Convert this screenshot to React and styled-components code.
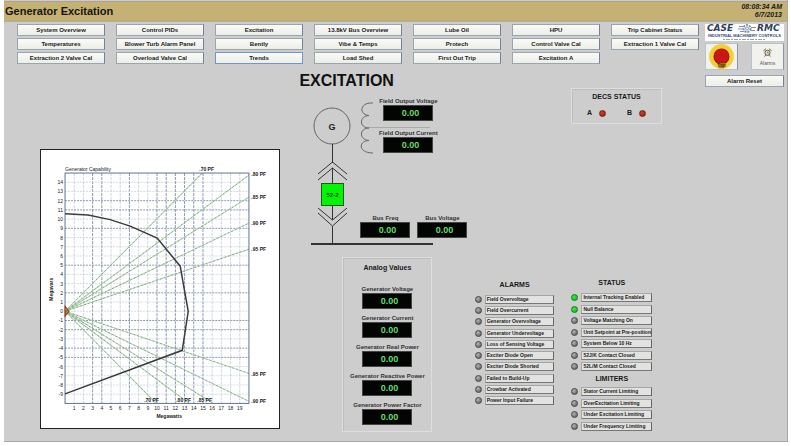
import React from "react";
import styled, { createGlobalStyle } from "styled-components";

const GlobalStyle = createGlobalStyle`
  * { box-sizing: border-box; }
  body {
    margin: 0;
    background: #fff;
    color: #1a1a1a;
    font-family: "Liberation Sans", Arial, sans-serif;
    font-size: 6px;
    line-height: 8px;
  }
  button { font: inherit; color: inherit; cursor: pointer; }
  h1, h2, h3, dl, dd, ul, figure { margin: 0; padding: 0; }
`;

const Screen = styled.div`
  margin: 0 3px 0 4px;
  padding-top: 1px;
  background: #cdcdcd;
  border: solid #a9a9a9;
  border-width: 0 1px 1px 0;
`;

const Header = styled.header`
  display: flex;
  justify-content: space-between;
  align-items: center;
  height: 21px;
  padding: 0 5px 0 1px;
  background: #c5b173;
  border-top: 1px solid #aaa493;
  border-bottom: 2px solid #b9ae8a;
`;

const Title = styled.h1`
  font-size: 11px;
  line-height: 16px;
  color: #16160f;
`;

const Clock = styled.div`
  font-size: 7px;
  line-height: 8px;
  font-weight: bold;
  font-style: italic;
  text-align: right;
`;

const Body = styled.div`
  display: flex;
  gap: 6px;
  padding: 2px 3px 9px 13px;
`;

const Main = styled.main`
  flex: 1;
  min-width: 0;
`;

const Nav = styled.nav`
  display: grid;
  grid-template-columns: repeat(7, minmax(0, 1fr));
  gap: 2px 11px;
`;

const NavButton = styled.button`
  height: 12px;
  padding: 0;
  background: linear-gradient(#fafaf6, #eeeee8);
  border: 1px solid ${(p) => (p.$active ? "#6f97cc" : "#98a5b2")};
  border-right-color: ${(p) => (p.$active ? "#6f97cc" : "#70839b")};
  font-weight: bold;
  font-size: 6px;
  line-height: 8px;
  white-space: nowrap;
`;

const Side = styled.aside`
  display: grid;
  grid-template-columns: 33px 33px;
  justify-content: space-between;
  align-content: start;
  width: 79px;
  row-gap: 2px;
`;

const Wide = styled.div`
  grid-column: 1 / -1;
  display: grid;
  margin-top: ${(p) => p.$top || 0}px;
`;

const IconButton = styled.button`
  display: flex;
  flex-direction: column;
  align-items: center;
  justify-content: center;
  gap: 3px;
  height: 27px;
  padding: 0;
  background: #f1f1ed;
  border: 1px solid #b8c3ce;
  border-right-color: #8796a8;
  color: #555;
  font-size: 5px;
  line-height: 6px;
`;

const Content = styled.div`
  display: grid;
  grid-template-columns: minmax(0, 240fr) minmax(0, 178fr) minmax(0, 187fr);
  gap: 8px;
  padding: 7px 37px 0 23px;
`;

const ChartFrame = styled.figure`
  align-self: start;
  margin-top: 78px;
  border: 1px solid #222;
  background: #fff;
  svg { display: block; width: 100%; height: auto; }
`;

const ChartText = styled.text`
  font-size: 5px;
  font-weight: ${(p) => (p.$bold ? "bold" : "normal")};
  text-anchor: ${(p) => p.$anchor || "start"};
  fill: #222;
`;

const Centre = styled.section`
  padding-left: 11px;
`;

const Heading = styled.h2`
  font-size: 16px;
  line-height: 20px;
  color: #111;
`;

const Diagram = styled.div`
  position: relative;
  height: 158px;
  svg { display: block; }
`;

const Node = styled.div`
  position: absolute;
  left: ${(p) => p.$x}px;
  top: ${(p) => p.$y}px;
`;

const ReadoutBox = styled.dl`
  display: flex;
  flex-direction: column;
  align-items: center;
  width: 50px;
`;

const ReadoutLabel = styled.dt`
  font-size: 6px;
  line-height: 8px;
  font-weight: bold;
  color: #333;
  white-space: nowrap;
`;

const ReadoutValue = styled.dd`
  width: 50px;
  height: 16px;
  padding-left: 4px;
  background: #030503;
  border: 1px solid #444;
  color: #62de6a;
  font-size: 9px;
  line-height: 14px;
  font-weight: bold;
  text-align: center;
`;

const Panel = styled.section`
  border: 1px solid #dedede;
  box-shadow: inset 1px 1px 0 #bdbdbd;
`;

const AnalogPanel = styled(Panel)`
  display: flex;
  flex-direction: column;
  align-items: center;
  gap: 5px;
  width: 90px;
  padding-bottom: 6px;
  margin: 8px 0 0 43px;
`;

const PanelTitle = styled.h3`
  font-size: 7px;
  line-height: 8px;
  text-align: center;
`;

const AnalogTitle = styled(PanelTitle)`
  padding: 6px 0 8px;
`;

const Right = styled.section`
  display: flex;
  flex-direction: column;
  padding-top: 17px;
`;

const DecsPanel = styled(Panel)`
  align-self: flex-end;
  width: 91px;
  height: 36px;
  padding-top: 4px;
`;

const DecsRow = styled.div`
  display: flex;
  justify-content: center;
  gap: 21px;
  margin-top: 8px;
  font-size: 7px;
  line-height: 8px;
  font-weight: bold;
`;

const DecsItem = styled.span`
  display: flex;
  align-items: center;
  gap: 7px;
`;

const Lamp = styled.span`
  flex: none;
  width: 7px;
  height: 7px;
  border-radius: 50%;
  border: 1px solid ${(p) => ({ red: "#4d3311", green: "#167820", off: "#454545" })[p.$tone]};
  background: ${(p) =>
    ({
      red: "radial-gradient(circle at 40% 35%, #e03a27, #b00808)",
      green: "radial-gradient(circle at 40% 35%, #30f530, #04b80a)",
      off: "radial-gradient(circle at 35% 30%, #b5b5b5, #555)",
    })[p.$tone]};
`;

const Lists = styled.div`
  display: grid;
  grid-template-columns: 1fr 1fr;
  column-gap: 17px;
  padding: 155px 10px 0 0;
`;

const Column = styled.div`
  padding-top: ${(p) => p.$top || 0}px;
`;

const ListTitle = styled(PanelTitle)`
  padding: ${(p) => p.$top || 0}px 0 ${(p) => p.$bottom}px;
`;

const LampList = styled.ul`
  display: flex;
  flex-direction: column;
  justify-content: space-between;
  min-height: ${(p) => p.$height}px;
  list-style: none;
`;

const LampRow = styled.li`
  display: flex;
  align-items: center;
  gap: 3px;
`;

const LampLabel = styled.span`
  flex: 1;
  height: 9px;
  padding-left: 1px;
  background: #e2e2e0;
  border: 1px solid #a6a6a6;
  border-right-color: #666;
  border-bottom-color: #777;
  font-size: 5px;
  line-height: 7px;
  font-weight: bold;
  white-space: nowrap;
`;

const navItems = [
  "System Overview", "Control PIDs", "Excitation", "13.8kV Bus Overview", "Lube Oil", "HPU", "Trip Cabinet Status",
  "Temperatures", "Blower Turb Alarm Panel", "Bently", "Vibe & Temps", "Protech", "Control Valve Cal", "Extraction 1 Valve Cal",
  "Extraction 2 Valve Cal", "Overload Valve Cal", "Trends", "Load Shed", "First Out Trip", "Excitation A",
];

const analogs = [
  "Generator Voltage", "Generator Current", "Generator Real Power", "Generator Reactive Power", "Generator Power Factor",
];

const alarms = [
  "Field Overvoltage", "Field Overcurrent", "Generator Overvoltage", "Generator Undervoltage", "Loss of Sensing Voltage",
  "Exciter Diode Open", "Exciter Diode Shorted", "Failed to Build-Up", "Crowbar Activated", "Power Input Failure",
].map((label) => ({ label, tone: "off" }));

const statuses = [
  { label: "Internal Tracking Enabled", tone: "green" },
  { label: "Null Balance", tone: "green" },
  { label: "Voltage Matching On", tone: "off" },
  { label: "Unit Setpoint at Pre-position", tone: "off" },
  { label: "System Below 10 Hz", tone: "off" },
  { label: "52J/K Contact Closed", tone: "off" },
  { label: "52L/M Contact Closed", tone: "off" },
];

const limiters = [
  "Stator Current Limiting", "OverExcitation Limiting", "Under Excitation Limiting", "Under Frequency Limiting",
].map((label) => ({ label, tone: "off" }));

function Readout({ label }) {
  return (
    <ReadoutBox>
      <ReadoutLabel>{label}</ReadoutLabel>
      <ReadoutValue>0.00</ReadoutValue>
    </ReadoutBox>
  );
}

function Lamps({ items, height }) {
  return (
    <LampList $height={height}>
      {items.map((item) => (
        <LampRow key={item.label}>
          <Lamp $tone={item.tone} />
          <LampLabel>{item.label}</LampLabel>
        </LampRow>
      ))}
    </LampList>
  );
}

function Logo() {
  return (
    <svg width="79" height="17" viewBox="0 0 79 17" role="img" aria-label="Case RMC">
      <rect width="79" height="17" fill="#fff" />
      <g fill="#2d405e" fontFamily="DejaVu Sans" fontWeight="bold" fontStyle="italic" fontSize="9">
        <text x="2" y="7">CASE</text>
        <text x="52" y="7">RMC</text>
      </g>
      <g fill="none" stroke="#7f8fa8">
        <circle cx="42" cy="4.500" r="3.500" strokeWidth="2" strokeDasharray="2 1" />
        <circle cx="42" cy="4.500" r="1.500" />
        <path d="M34 2.500h4M33 5h5M35 7.500h4M46 3.500h5M46 6.500h4" />
      </g>
      <text x="39.500" y="13" textAnchor="middle" fontSize="4" fontWeight="bold" fill="#334a78">INDUSTRIAL MACHINERY CONTROLS</text>
      <path d="M18 15.500h42" stroke="#9b9fa8" strokeDasharray="2 1 4 1" />
    </svg>
  );
}

function StopIcon() {
  return (
    <svg width="27" height="25" viewBox="0 0 27 25" aria-hidden="true">
      <circle cx="13.500" cy="12.500" r="12.400" fill="#f4cf35" />
      <circle cx="13.500" cy="12.500" r="8" fill="#a91414" />
      <circle cx="13.500" cy="12" r="7" fill="#c91616" />
      <path d="M9 19h9l-2 5h-5z" fill="#a87c1a" />
      <text x="13.500" y="23" textAnchor="middle" fontSize="5" fill="#2b1b05">Trip</text>
    </svg>
  );
}

function AlarmIcon() {
  return (
    <svg width="9" height="9" viewBox="0 0 9 9" fill="none" stroke="#5a564a" aria-hidden="true">
      <circle cx="4.500" cy="4.800" r="2.600" fill="#e8dfb8" />
      <path d="M0.500 2.800L2.800 0.800M6.200 0.800L8.500 2.800M2.500 7.200L1.700 8.500M6.500 7.200L7.300 8.500" />
      <path d="M4.500 3.800V5H6" strokeWidth="0.600" />
    </svg>
  );
}

/* Plot area: 20 MW across, +15 to -10 Mvar, origin at the left edge. */
const OX = 25;
const OY = 160;
const px = (v) => OX + v * 9.18;
const py = (v) => OY - v * 9.2;
const strongX = [3, 4, 7, 10, 11, 12, 13, 14, 15];
const strongY = [12, 11, 9, 5, 2, -1, -2, -4, -5];
const range = (a, b) => Array.from({ length: b - a + 1 }, (_, i) => a + i);
const pfLines = [
  [162, 22], [208.6, 24], [208.6, 46], [208.6, 72], [208.6, 98],
  [208.6, 222], [208.6, 250], [173, 252], [149, 252], [116, 252],
];
const pfLabels = [
  [159, 20, ".70 PF"], [211, 25, ".80 PF"], [211, 48, ".85 PF"], [211, 74, ".90 PF"], [211, 100, ".95 PF"],
  [211, 225, ".95 PF"], [211, 252, ".90 PF"], [157, 251, ".85 PF"], [136, 251, ".80 PF"], [104, 251, ".70 PF"],
];

function CapabilityChart() {
  return (
    <svg viewBox="1 -1 238 278" role="img" aria-label="Generator Capability">
      <ChartText x="25" y="20">Generator Capability</ChartText>
      {range(1, 19).map((v) => (
        <g key={v}>
          <path
            d={`M${px(v)} 22V252`}
            stroke={strongX.includes(v) ? "#6c7f9c" : "#c5cddb"}
            strokeWidth="0.8"
            strokeDasharray="3 1"
          />
          <ChartText x={px(v)} y="259" $anchor="middle">{v}</ChartText>
        </g>
      ))}
      {range(-9, 14).map((v) => (
        <g key={v}>
          <path
            d={`M25 ${py(v)}H208.6`}
            stroke={strongY.includes(v) ? "#6f819b" : "#ccd3de"}
            strokeWidth="0.8"
            strokeDasharray="2 1"
          />
          <ChartText x="23" y={py(v) + 2} $anchor="end">{v}</ChartText>
        </g>
      ))}
      {pfLines.map(([x, y]) => (
        <g key={`${x},${y}`}>
          <path d={`M25 160L${x} ${y}`} stroke="#b4d6b4" strokeWidth="1" />
          <path d={`M25 160L${x} ${y}`} stroke="#6d8a70" strokeWidth="0.6" strokeDasharray="2 2" />
        </g>
      ))}
      <rect x="25" y="22" width="183.6" height="230" fill="none" stroke="#5e7397" />
      <path
        d="M25 62.700L48 64L70 68.500L90 75L117 87L140 115L144 138L148 160L142 199L25 242.500"
        fill="none"
        stroke="#3c3c3c"
        strokeWidth="1.5"
      />
      <path d="M25 155L29 160L25 165Z" fill="#6ca12a" stroke="#b02a12" />
      {pfLabels.map(([x, y, t]) => (
        <ChartText key={`${x},${y}`} x={x} y={y} $bold>{t}</ChartText>
      ))}
      <ChartText x="129" y="267" $anchor="middle" $bold>Megawatts</ChartText>
      <ChartText x="0" y="0" transform="translate(13 138) rotate(-90)" $anchor="middle" $bold>Megavars</ChartText>
    </svg>
  );
}

function OneLine() {
  return (
    <svg width="140" height="158" viewBox="299 91 140 158" fill="none" stroke="#333" role="img" aria-label="Generator one-line diagram">
      <circle cx="332" cy="126" r="18" stroke="#666" />
      <text x="332" y="130" textAnchor="middle" fontSize="9" fontWeight="bold" fill="#222" stroke="none">G</text>
      <path d="M332.500 144V163M318 174L332.500 162L347 174M318 180L332.500 168L347 180M332.500 168V183" />
      <rect x="321.500" y="183.500" width="22" height="22" fill="#04f404" stroke="#1d5a1d" />
      <text x="332.500" y="197" textAnchor="middle" fontSize="6" fontWeight="bold" fill="#0b4a0b" stroke="none">52-2</text>
      <path d="M332.500 206V220M318 208L332.500 220L347 208M318 213L332.500 226L347 213M332.500 226V244" />
      <path d="M311 244H433" strokeWidth="2" />
      <path
        d="M373 103C359 102 359 115 369 115.500C359 116 359 128 369 128C359 128 359 140 369 140.500C358 141 358 153 373 153"
        stroke="#666"
      />
      <path d="M369 127.500H430" stroke="#aaa" />
    </svg>
  );
}

export default function App() {
  return (
    <>
      <GlobalStyle />
      <Screen>
        <Header>
          <Title>Generator Excitation</Title>
          <Clock>
            <div>08:08:34 AM</div>
            <div>6/7/2013</div>
          </Clock>
        </Header>
        <Body>
          <Main>
            <Nav>
              {navItems.map((label) => (
                <NavButton key={label} $active={label === "Trends"}>{label}</NavButton>
              ))}
            </Nav>
            <Content>
              <ChartFrame><CapabilityChart /></ChartFrame>
              <Centre>
                <Heading>EXCITATION</Heading>
                <Diagram>
                  <OneLine />
                  <Node $x={84} $y={6}><Readout label="Field Output Voltage" /></Node>
                  <Node $x={84} $y={38}><Readout label="Field Output Current" /></Node>
                  <Node $x={61} $y={123}><Readout label="Bus Freq" /></Node>
                  <Node $x={118} $y={123}><Readout label="Bus Voltage" /></Node>
                </Diagram>
                <AnalogPanel>
                  <AnalogTitle>Analog Values</AnalogTitle>
                  {analogs.map((label) => <Readout key={label} label={label} />)}
                </AnalogPanel>
              </Centre>
              <Right>
                <DecsPanel>
                  <PanelTitle>DECS STATUS</PanelTitle>
                  <DecsRow>
                    <DecsItem>A <Lamp $tone="red" /></DecsItem>
                    <DecsItem>B <Lamp $tone="red" /></DecsItem>
                  </DecsRow>
                </DecsPanel>
                <Lists>
                  <Column $top={2}>
                    <ListTitle $bottom={6}>ALARMS</ListTitle>
                    <Lamps items={alarms} height={110} />
                  </Column>
                  <Column>
                    <ListTitle $bottom={6}>STATUS</ListTitle>
                    <Lamps items={statuses} height={78} />
                    <ListTitle $top={4} $bottom={4}>LIMITERS</ListTitle>
                    <Lamps items={limiters} height={44} />
                  </Column>
                </Lists>
              </Right>
            </Content>
          </Main>
          <Side>
            <Wide><Logo /></Wide>
            <IconButton aria-label="Trip"><StopIcon /></IconButton>
            <IconButton><AlarmIcon />Alarms</IconButton>
            <Wide $top={3}><NavButton>Alarm Reset</NavButton></Wide>
          </Side>
        </Body>
      </Screen>
    </>
  );
}
